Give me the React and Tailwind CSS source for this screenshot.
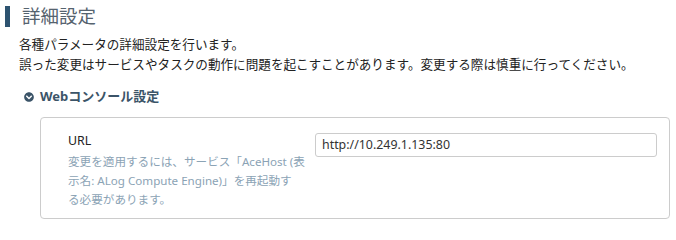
import React from "react";
import { FaChevronCircleDown } from "react-icons/fa";

const font = {
  fontFamily: '"Noto Sans", "Noto Sans CJK JP", sans-serif',
};

function SettingRow() {
  return (
    <div className="ml-[40px] w-[630px] h-[102px] border border-[#cccccc] rounded-[4px] flex">
      <div className="w-[274px] pl-[27px] pt-[13px]">
        <p className="text-[12.4px] leading-[19px] text-[#222222]">URL</p>
        <p className="mt-[1.5px] text-[11.6px] leading-[19px] text-[#8ba3b5] whitespace-nowrap">
          変更を適用するには、サービス「AceHost (表
          <br />
          示名: ALog Compute Engine)」を再起動す
          <br />
          る必要があります。
        </p>
      </div>
      <div className="pt-[13px]">
        <input
          type="text"
          readOnly
          defaultValue="http://10.249.1.135:80"
          className="w-[342px] h-[24px] border border-[#cccccc] rounded-[3px] pl-[6px] text-[12.4px] text-[#333333] outline-none"
          style={font}
        />
      </div>
    </div>
  );
}

export default function App() {
  return (
    <div className="w-[676px] h-[226px] bg-white overflow-hidden" style={font}>
      <div className="h-[32px] flex items-center">
        <div className="ml-[5px] w-[5px] h-[21px] bg-[#2d5370]" />
        <h1 className="ml-[12px] text-[18.5px] leading-[24px] text-[#56636f]">詳細設定</h1>
      </div>

      <div className="mt-[3px] pl-[19px] text-[12.6px] leading-[19.5px] text-[#222222]">
        <p>各種パラメータの詳細設定を行います。</p>
        <p>誤った変更はサービスやタスクの動作に問題を起こすことがあります。変更する際は慎重に行ってください。</p>
      </div>

      <div className="mt-[13px] h-[20px] pl-[24px] flex items-center text-[#3b5468]">
        <FaChevronCircleDown className="w-[10px] h-[10px]" />
        <span className="ml-[6px] text-[13px] font-bold">Webコンソール設定</span>
      </div>

      <div className="mt-[10px]">
        <SettingRow />
      </div>
    </div>
  );
}
